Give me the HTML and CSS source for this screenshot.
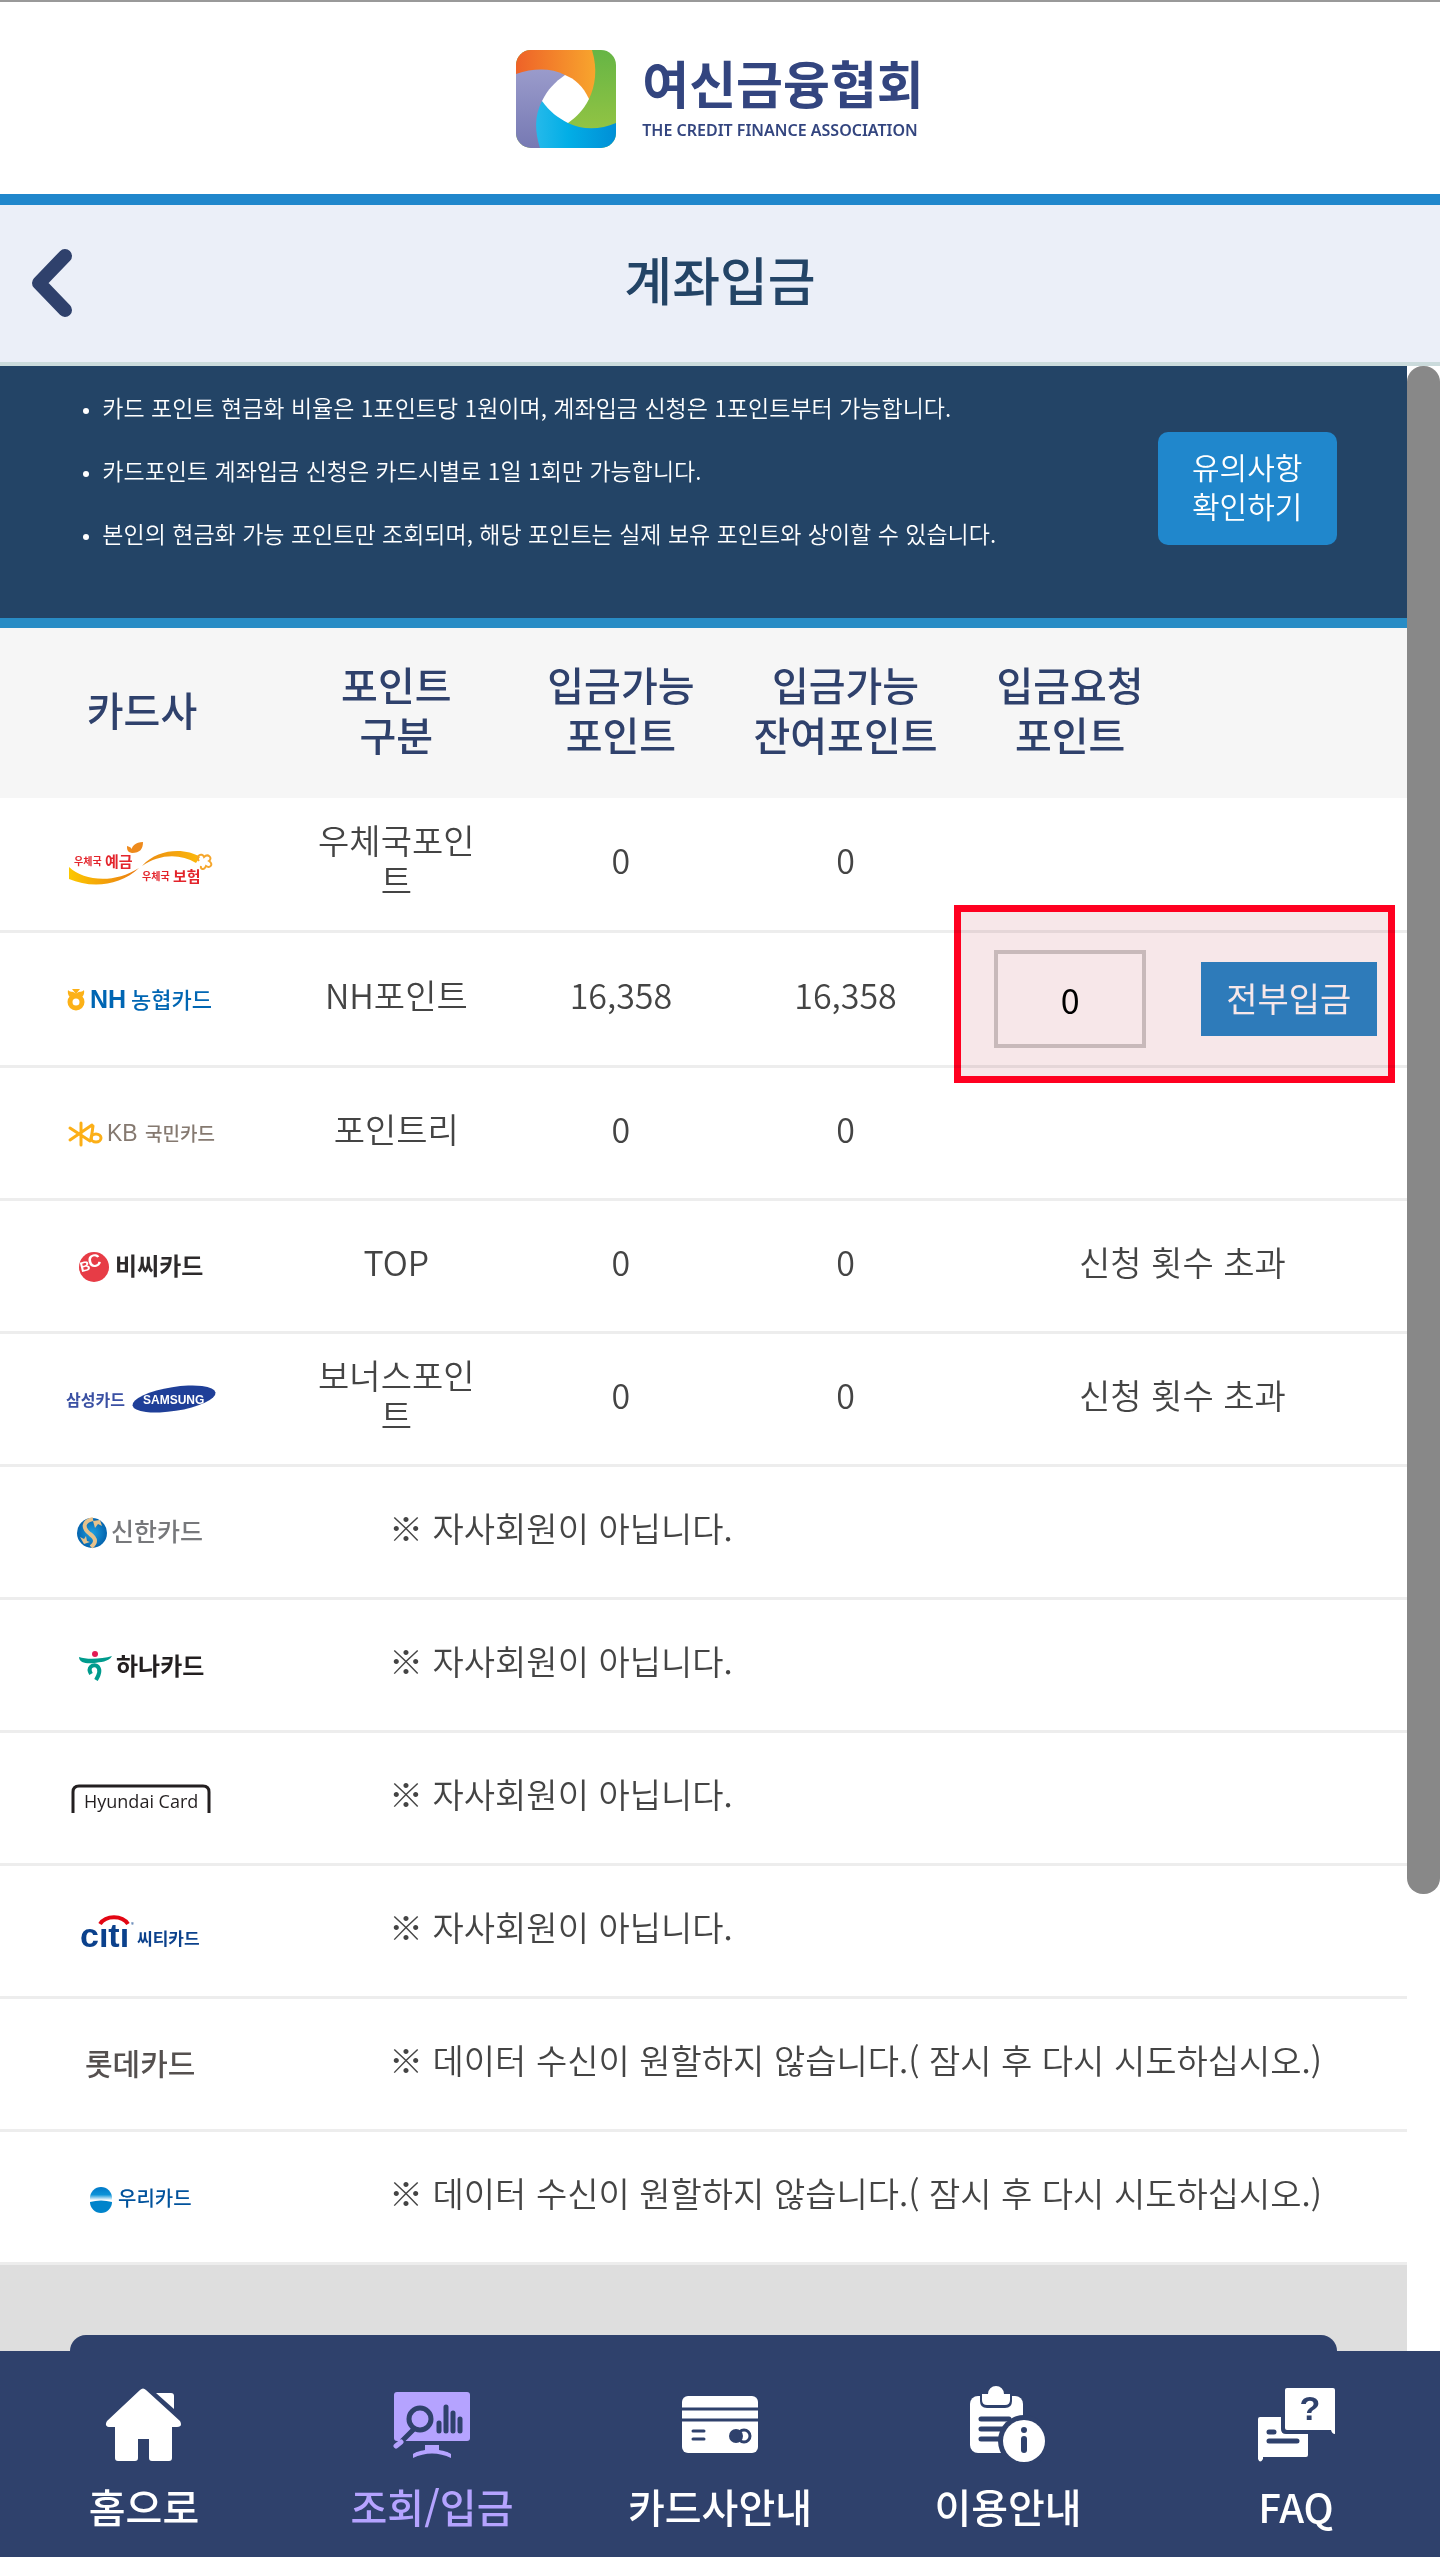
FILE: index.html
```html
<!DOCTYPE html>
<html lang="ko">
<head>
  <meta charset="UTF-8" />
  <meta name="viewport" content="width=device-width, initial-scale=1.0" />
  <title>계좌입금 - 여신금융협회</title>
  <link rel="stylesheet" href="styles.css">
</head>
<body>

  <header class="top">
    <a href="#" class="brand">
      <svg class="brand-mark" viewBox="0 0 100 100" aria-hidden="true">
        <defs>
          <clipPath id="mark"><rect width="100" height="98" rx="15" /></clipPath>
          <linearGradient id="m-orange"><stop offset="0" stop-color="#ee6228" /><stop offset="1" stop-color="#f8a52d" /></linearGradient>
          <linearGradient id="m-green" x2="0" y2="1"><stop offset="0" stop-color="#66b545" /><stop offset="1" stop-color="#9cc743" /></linearGradient>
          <linearGradient id="m-blue"><stop offset="0" stop-color="#25b9ea" /><stop offset=".4" stop-color="#02aee6" /><stop offset="1" stop-color="#018fd6" /></linearGradient>
          <linearGradient id="m-violet" x2="0" y2="1"><stop offset="0" stop-color="#9a9bcb" /><stop offset="1" stop-color="#7679b3" /></linearGradient>
        </defs>
        <g clip-path="url(#mark)">
          <rect width="100" height="98" fill="url(#m-green)" />
          <path d="M0 0H76C82 20 79 36 73 49L50 60 0 60z" fill="url(#m-orange)" />
          <path d="M0 24C18 18 35 18 49 25L60 60 26 98H0z" fill="url(#m-violet)" />
          <path d="M26 51C18 66 19 82 24 98H100V73C84 80 66 80 52 73L40 55z" fill="url(#m-blue)" />
          <path d="M49 25C59 29 67 36 73 49 67 61 60 67 52 73 42 68 33 61 26 51 32 39 39 32 49 25z" fill="#fff" />
        </g>
      </svg>
      <span class="brand-name">
        <strong>여신금융협회</strong>
        <small>THE CREDIT FINANCE ASSOCIATION</small>
      </span>
    </a>
  </header>

  <div class="title-bar">
    <button class="back" type="button" aria-label="뒤로">
      <svg viewBox="0 0 44 72" aria-hidden="true"><path d="M35 8L9 35L35 62" /></svg>
    </button>
    <h1>계좌입금</h1>
  </div>

  <main class="view">
    <div class="content">

      <section class="notice">
        <ul>
          <li>카드 포인트 현금화 비율은 1포인트당 1원이며, 계좌입금 신청은 1포인트부터 가능합니다.</li>
          <li>카드포인트 계좌입금 신청은 카드시별로 1일 1회만 가능합니다.</li>
          <li>본인의 현금화 가능 포인트만 조회되며, 해당 포인트는 실제 보유 포인트와 상이할 수 있습니다.</li>
        </ul>
        <button class="notice-btn" type="button">유의사항<br />확인하기</button>
      </section>

      <table class="points">
        <colgroup>
          <col class="col-card" /><col /><col /><col /><col /><col />
        </colgroup>
        <thead>
          <tr>
            <th>카드사</th>
            <th>포인트<br />구분</th>
            <th>입금가능<br />포인트</th>
            <th>입금가능<br />잔여포인트</th>
            <th>입금요청<br />포인트</th>
            <th></th>
          </tr>
        </thead>
        <tbody>
          <tr class="tall">
            <td class="card">
              <svg class="logo" viewBox="0 0 160 60" role="img" aria-label="우체국예금 우체국보험">
                <defs>
                  <linearGradient id="p-a"><stop offset="0" stop-color="#fcc800" /><stop offset="1" stop-color="#ea7a14" /></linearGradient>
                  <linearGradient id="p-b"><stop offset="0" stop-color="#ea8a14" /><stop offset="1" stop-color="#fcb80a" /></linearGradient>
                </defs>
                <path d="M7 33C22 47 52 50 77 34 57 53 28 54 7 45z" fill="url(#p-a)" />
                <path d="M80 32C96 14 124 14 138 23L134 29C118 19 97 20 80 32z" fill="url(#p-b)" />
                <path d="M70 19C68 12 74 8 81 8 81 15 78 19 70 19zM70 19C65 18 65 15 65 12 69 13 71 15 70 19z" fill="#ee8a1c" />
                <path d="M137 27C133 22 140 18 142 23 146 19 151 24 147 27 152 30 148 35 144 32 142 37 138 35 139 32" fill="none" stroke="#f5a62c" stroke-width="2" />
                <g fill="#e3242b" font-weight="700">
                  <text x="12" y="31" font-size="10">우체국</text>
                  <text x="43" y="33" font-size="15">예금</text>
                  <text x="80" y="46" font-size="10">우체국</text>
                  <text x="111" y="48" font-size="15">보험</text>
                </g>
              </svg>
            </td>
            <td>우체국포인트</td>
            <td>0</td>
            <td>0</td>
            <td></td>
            <td></td>
          </tr>
          <tr class="tall">
            <td class="card">
              <svg class="logo" viewBox="0 0 160 60" role="img" aria-label="NH농협카드">
                <circle cx="14" cy="33" r="6" fill="none" stroke="#fcb117" stroke-width="5" />
                <path d="M6 21C8 24 10 21 14 25 18 21 20 24 22 21 23 26 20 29 17 29H11C8 29 5 26 6 21zM10 20H18L14 25z" fill="#fcb117" />
                <g fill="#0066b3">
                  <text class="latin" x="28" y="39" font-size="25" font-weight="700">NH</text>
                  <text x="69" y="39" font-size="22" font-weight="500">농협카드</text>
                </g>
              </svg>
            </td>
            <td>NH포인트</td>
            <td>16,358</td>
            <td>16,358</td>
            <td colspan="2" class="request">
              <div class="request-row">
                <input type="text" value="0" inputmode="numeric" aria-label="입금요청 포인트" />
                <button type="button">전부입금</button>
              </div>
              <span class="highlight"></span>
            </td>
          </tr>
          <tr>
            <td class="card">
              <svg class="logo" viewBox="0 0 160 60" role="img" aria-label="KB국민카드">
                <g fill="none" stroke="#fcaf17" stroke-width="3" stroke-linecap="round">
                  <path d="M19 20V42M8 25L28 38M30 22L8 37M31 23L29 37" />
                  <ellipse cx="34" cy="35" rx="5" ry="4" />
                </g>
                <g fill="#857970">
                  <text class="latin" x="45" y="38" font-size="23">KB</text>
                  <text x="83" y="38" font-size="19" font-weight="500">국민카드</text>
                </g>
              </svg>
            </td>
            <td>포인트리</td>
            <td>0</td>
            <td>0</td>
            <td></td>
            <td></td>
          </tr>
          <tr>
            <td class="card">
              <svg class="logo" viewBox="0 0 160 60" role="img" aria-label="비씨카드">
                <circle cx="32" cy="31" r="15" fill="#e73c46" />
                <g class="latin" fill="#fff" font-weight="700" transform="rotate(-14 28 30)">
                  <text x="18" y="34" font-size="14">B</text>
                  <text x="27" y="32" font-size="18">C</text>
                </g>
                <text x="53" y="39" font-size="24" font-weight="700" fill="#2d2a2b">비씨카드</text>
              </svg>
            </td>
            <td>TOP</td>
            <td>0</td>
            <td>0</td>
            <td colspan="2">신청 횟수 초과</td>
          </tr>
          <tr>
            <td class="card">
              <svg class="logo" viewBox="0 0 160 60" role="img" aria-label="삼성카드">
                <text x="4" y="37" font-size="16" font-weight="700" fill="#3a50a3">삼성카드</text>
                <ellipse cx="112" cy="30" rx="42" ry="12" fill="#1f3f98" transform="rotate(-9 112 30)" />
                <text class="latin" x="81" y="35" font-size="12" font-weight="700" fill="#fff">SAMSUNG</text>
              </svg>
            </td>
            <td>보너스포인트</td>
            <td>0</td>
            <td>0</td>
            <td colspan="2">신청 횟수 초과</td>
          </tr>
          <tr>
            <td class="card">
              <svg class="logo" viewBox="0 0 160 60" role="img" aria-label="신한카드">
                <defs>
                  <radialGradient id="s-ball"><stop offset="0" stop-color="#1fa0e0" /><stop offset="1" stop-color="#0464ae" /></radialGradient>
                </defs>
                <circle cx="30" cy="31" r="15" fill="url(#s-ball)" />
                <path d="M31 17C21 19 20 26 28 32 35 37 34 41 29 45" fill="none" stroke="#e6c28c" stroke-width="4" />
                <path d="M31 19L38 18 40 24 36 22 33 26zM18 35L22 37 24 34 25 39 28 40 22 42z" fill="#e6c28c" />
                <text x="49" y="39" font-size="25" font-weight="500" fill="#77787b">신한카드</text>
              </svg>
            </td>
            <td colspan="5" class="message">※ 자사회원이 아닙니다.</td>
          </tr>
          <tr>
            <td class="card">
              <svg class="logo" viewBox="0 0 160 60" role="img" aria-label="하나카드">
                <circle cx="33" cy="19" r="3" fill="#e31b54" />
                <path d="M17 22C25 25 40 24 50 21 47 27 38 27 32 28 25 29 17 28 17 22z" fill="#009b8d" />
                <path d="M29 39C25 32 31 29 35 31 39 34 37 40 34 45" fill="none" stroke="#009b8d" stroke-width="4" />
                <text x="54" y="40" font-size="24" font-weight="700" fill="#231f20">하나카드</text>
              </svg>
            </td>
            <td colspan="5" class="message">※ 자사회원이 아닙니다.</td>
          </tr>
          <tr>
            <td class="card">
              <svg class="logo" viewBox="0 0 160 60" role="img" aria-label="Hyundai Card">
                <path d="M11 45V24Q11 18 17 18H141Q147 18 147 24V45" fill="none" stroke="#231f20" stroke-width="3" />
                <text class="hyundai" x="22" y="40" font-size="18" fill="#231f20">Hyundai Card</text>
              </svg>
            </td>
            <td colspan="5" class="message">※ 자사회원이 아닙니다.</td>
          </tr>
          <tr>
            <td class="card">
              <svg class="logo" viewBox="0 0 160 60" role="img" aria-label="citi 씨티카드">
                <path d="M38 23C44 14 60 14 66 23" fill="none" stroke="#e30613" stroke-width="4" />
                <g fill="#0b418c">
                  <text class="latin" x="18" y="46" font-size="34" font-weight="700">cıtı</text>
                  <text x="69" y="26" font-size="6">®</text>
                  <text x="75" y="44" font-size="17" font-weight="700">씨티카드</text>
                </g>
              </svg>
            </td>
            <td colspan="5" class="message">※ 자사회원이 아닙니다.</td>
          </tr>
          <tr>
            <td class="card">
              <svg class="logo" viewBox="0 0 160 60" role="img" aria-label="롯데카드">
                <text x="23" y="41" font-size="30" font-weight="500" fill="#55504f">롯데카드</text>
              </svg>
            </td>
            <td colspan="5" class="message">※ 데이터 수신이 원할하지 않습니다.( 잠시 후 다시 시도하십시오.)</td>
          </tr>
          <tr>
            <td class="card">
              <svg class="logo" viewBox="0 0 160 60" role="img" aria-label="우리카드">
                <defs>
                  <linearGradient id="w-sky" x2="0" y2="1"><stop offset="0" stop-color="#0079c8" /><stop offset=".35" stop-color="#0c93d8" /><stop offset=".6" stop-color="#fff" /></linearGradient>
                </defs>
                <circle cx="39" cy="31" r="11" fill="url(#w-sky)" />
                <path d="M28 35Q39 32 50 35A11 11 0 0 1 28 35z" fill="#0084cb" />
                <text x="56" y="39" font-size="20" font-weight="500" fill="#00529c">우리카드</text>
              </svg>
            </td>
            <td colspan="5" class="message">※ 데이터 수신이 원할하지 않습니다.( 잠시 후 다시 시도하십시오.)</td>
          </tr>
        </tbody>
      </table>

      <div class="more">
        <div class="more-panel"></div>
      </div>
    </div>

    <div class="scroll-track">
      <div class="scroll-thumb"></div>
    </div>
  </main>

  <nav class="tabs">
    <a href="#">
      <svg viewBox="0 0 78 78" fill="currentColor" aria-hidden="true">
        <path d="M35 4Q38 1 41 4L75 35Q78 41 72 41H67V72Q67 75 64 75H47Q44 75 44 72V53H33V72Q33 75 30 75H13Q10 75 10 72V41H4Q-1 40 2 35z" />
        <path d="M51 7H66Q69 7 69 10V23z" />
      </svg>
      홈으로
    </a>
    <a href="#" class="on">
      <svg viewBox="0 0 78 78" aria-hidden="true">
        <rect x="1" y="6" width="76" height="49" rx="3" fill="currentColor" />
        <path d="M32 59H46V64C52 65 55 66 58 68V72C46 66 32 66 20 72V68C23 66 26 65 32 64z" fill="currentColor" />
        <path d="M20 44L9 55" class="cut" />
        <path d="M8 56L3 60" stroke="currentColor" stroke-width="5" stroke-linecap="round" />
        <circle cx="27" cy="33" r="11" class="cut" />
        <path d="M46 37V45M53 21V45M60 27V45M67 33V45" class="cut" />
      </svg>
      조회/입금
    </a>
    <a href="#">
      <svg viewBox="0 0 78 78" aria-hidden="true">
        <rect x="1" y="10" width="76" height="57" rx="6" fill="currentColor" />
        <path d="M1 23H77M1 34H77" class="cut thin" />
        <path d="M12 45H23M12 53H23" class="cut thin" />
        <circle cx="55" cy="50" r="7" class="hole" />
        <circle cx="63" cy="50" r="6" class="cut thin" />
      </svg>
      카드사안내
    </a>
    <a href="#">
      <svg viewBox="0 0 78 78" aria-hidden="true">
        <rect x="1" y="10" width="53" height="57" rx="8" fill="currentColor" />
        <path d="M11 7H43V15Q43 22 36 22H18Q11 22 11 15z" class="hole" />
        <path d="M13 8H19A8 8 0 0 1 35 8H41V14Q41 19 36 19H18Q13 19 13 14z" fill="currentColor" />
        <path d="M12 33H40M12 43H34M12 53H32" class="cut" />
        <circle cx="55" cy="55" r="26" class="hole" />
        <circle cx="55" cy="55" r="21" fill="currentColor" />
        <circle cx="55" cy="44" r="3" class="hole" />
        <path d="M55 53V64" class="cut wide" />
      </svg>
      이용안내
    </a>
    <a href="#">
      <svg viewBox="0 0 78 78" aria-hidden="true">
        <path d="M3 31H24V43Q24 48 29 48H51V69Q51 71 49 71H6V73Q3 78 1 73V33Q1 31 3 31z" fill="currentColor" />
        <path d="M30 2H76Q78 2 78 4V48Q75 48 74 44H30Q28 44 28 42V4Q28 2 30 2z" fill="currentColor" />
        <path d="M12 46H17M12 55H40" class="cut" />
        <text x="53" y="34" class="mark">?</text>
      </svg>
      FAQ
    </a>
  </nav>

</body>
</html>
```
FILE: styles.css
```css
* {
  box-sizing: border-box;
}

body {
  margin: 0;
  min-height: 100vh;
  display: flex;
  flex-direction: column;
  background: #fff;
  color: #444;
  font-family: "Noto Sans CJK KR", "Noto Sans", sans-serif;
}

button,
input {
  font-family: inherit;
}

a {
  text-decoration: none;
}

/* header */

.top {
  display: flex;
  justify-content: center;
  height: 205px;
  padding-top: 48px;
  border-top: 2px solid #999;
  border-bottom: 11px solid #2087cc;
}

.brand {
  display: flex;
  align-items: flex-start;
  gap: 26px;
  color: #33457f;
}

.brand-mark {
  width: 100px;
  height: 100px;
}

.brand-name strong,
.brand-name small {
  display: block;
}

.brand-name strong {
  margin-bottom: 8px;
  font-size: 51px;
  line-height: 64px;
}

.brand-name small {
  font-family: "Noto Sans", sans-serif;
  font-size: 16px;
  font-weight: 600;
  line-height: 16px;
}

.title-bar {
  display: grid;
  grid-template-columns: 80px 1fr 80px;
  align-items: center;
  height: 161px;
  padding: 0 12px;
  background: #ebeff8;
  border-bottom: 4px solid #cbdbdc;
}

.title-bar h1 {
  margin: 0;
  padding-bottom: 10px;
  color: #234466;
  font-size: 52px;
  font-weight: 500;
  line-height: 72px;
  text-align: center;
}

.back {
  width: 80px;
  padding: 0;
  border: 0;
  background: none;
  cursor: pointer;
}

.back svg {
  display: block;
  width: 44px;
  height: 72px;
  margin: 0 auto;
  fill: none;
  stroke: #2f416c;
  stroke-width: 14;
  stroke-linecap: round;
  stroke-linejoin: round;
}

/* scrolling area */

.view {
  display: flex;
  flex: 1;
}

.content {
  flex: 1;
  display: flex;
  flex-direction: column;
}

.scroll-track {
  width: 33px;
}

.scroll-thumb {
  height: 77%;
  border-radius: 16px;
  background: #888;
}

.notice {
  display: flex;
  align-items: center;
  justify-content: space-between;
  min-height: 262px;
  padding: 10px 5% 17px;
  background: #234466;
  border-bottom: 10px solid #288cc5;
  color: #fff;
}

.notice ul {
  align-self: flex-start;
  margin: 0;
  padding-left: 32px;
  font-size: 23px;
  font-weight: 350;
  line-height: 63px;
}

.notice li::marker {
  font-size: 16px;
}

.notice-btn {
  width: 179px;
  height: 113px;
  padding: 0 0 6px;
  border: 0;
  border-radius: 10px;
  background: #2087cc;
  color: #fff;
  font-size: 30px;
  font-weight: 350;
  line-height: 39px;
  cursor: pointer;
}

/* table */

.points {
  width: 100%;
  border-collapse: separate;
  border-spacing: 0;
  table-layout: fixed;
}

.col-card {
  width: 284px;
}

.points th {
  height: 170px;
  padding: 0 0 8px;
  background: #f6f6f6;
  color: #2f416c;
  font-size: 40px;
  font-weight: 500;
  line-height: 50px;
}

.points td {
  height: 133px;
  padding: 0 20px 8px;
  border-bottom: 3px solid #ededed;
  font-size: 34px;
  font-weight: 350;
  line-height: 40px;
  text-align: center;
}

.points .tall td {
  height: 135px;
}

.points .card {
  padding-bottom: 0;
}

.points .message {
  padding-left: 105px;
  text-align: left;
}

.logo {
  display: block;
  width: 160px;
  height: 60px;
  margin: 0 auto;
  font-weight: 400;
}

.logo .latin {
  font-family: "Liberation Sans", sans-serif;
}

.logo .hyundai {
  font-family: "Open Sans", sans-serif;
  font-weight: 500;
}

.points .request {
  position: relative;
  padding: 0;
}

.request-row {
  display: grid;
  grid-template-columns: 1fr 1fr;
  align-items: center;
  justify-items: center;
}

.request-row input {
  width: 152px;
  height: 98px;
  padding: 0;
  border: 4px solid #cfcccc;
  border-radius: 0;
  background: #fff;
  color: #000;
  font-size: 34px;
  text-align: center;
}

.request-row button {
  width: 176px;
  height: 74px;
  margin-right: 12px;
  padding: 0 0 4px;
  border: 0;
  background: #2f88cc;
  color: #fff;
  font-size: 34px;
  font-weight: 400;
  cursor: pointer;
}

.highlight {
  position: absolute;
  inset: -28px 12px -18px -4px;
  border: 7px solid #ff0020;
  background: #f7e7e9;
  mix-blend-mode: multiply;
  pointer-events: none;
}

.more {
  flex: 1;
  padding: 70px 5% 0;
  background: #dedede;
}

.more-panel {
  height: 16px;
  border-radius: 16px 16px 0 0;
  background: #2f416c;
}

/* bottom tabs */

.tabs {
  display: grid;
  grid-template-columns: repeat(5, 1fr);
  padding: 35px 0 21px;
  background: #2f416c;
}

.tabs a {
  display: flex;
  flex-direction: column;
  align-items: center;
  gap: 12px;
  color: #fff;
  font-size: 40px;
  font-weight: 500;
  line-height: 60px;
}

.tabs .on {
  color: #b5a3ff;
}

.tabs svg {
  width: 78px;
  height: 78px;
}

.tabs .hole {
  fill: #2f416c;
}

.tabs .cut {
  fill: none;
  stroke: #2f416c;
  stroke-width: 5;
  stroke-linecap: round;
}

.tabs .thin {
  stroke-width: 3;
}

.tabs .wide {
  stroke-width: 6;
}

.tabs .mark {
  fill: #2f416c;
  font-family: "Liberation Sans", sans-serif;
  font-size: 34px;
  font-weight: 700;
  text-anchor: middle;
}
```
